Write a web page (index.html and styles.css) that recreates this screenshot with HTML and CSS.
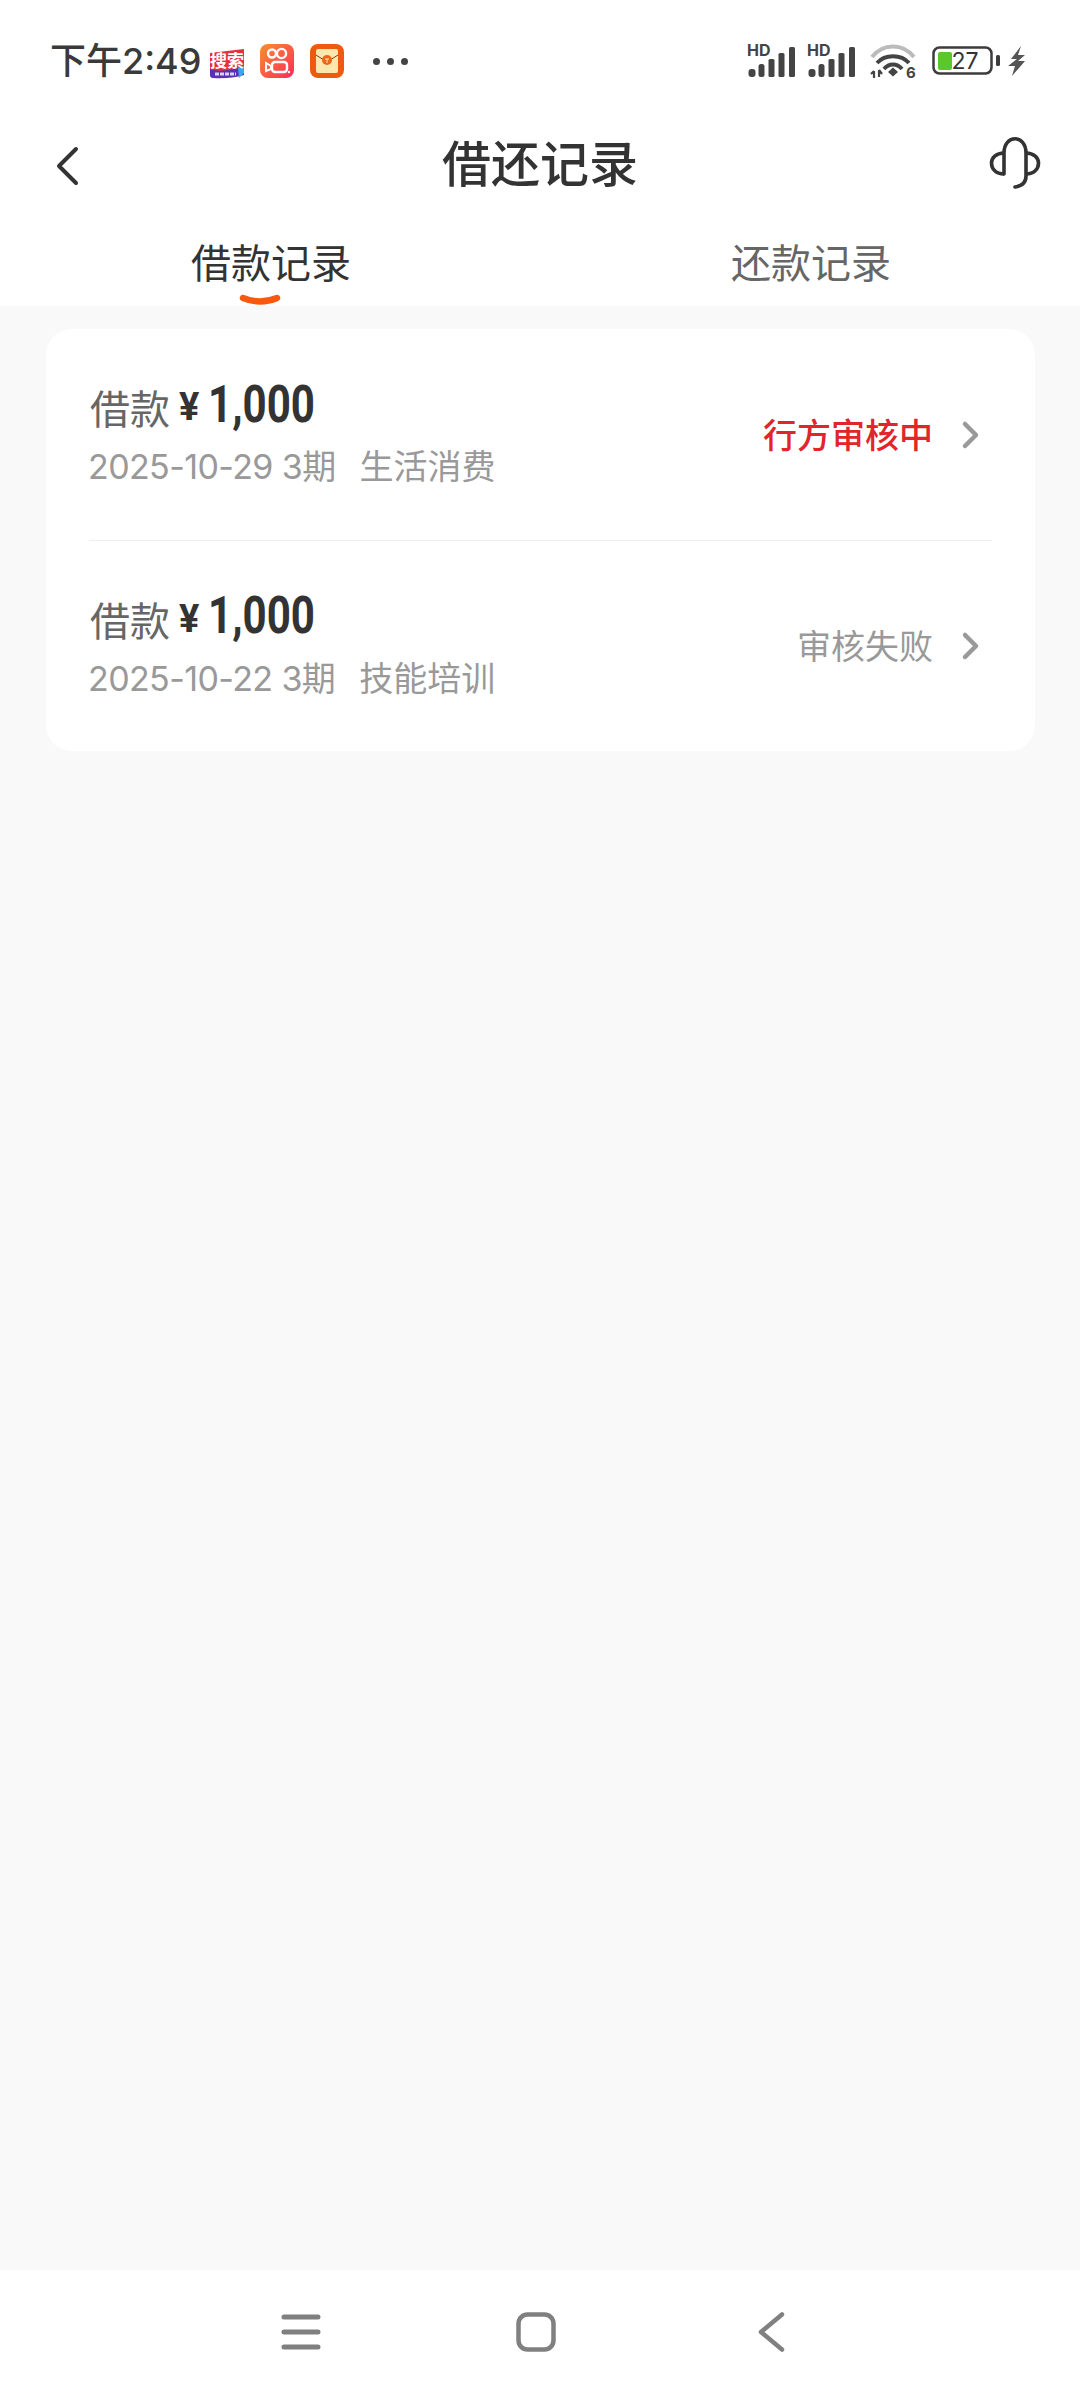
FILE: index.html
```html
<!DOCTYPE html>
<html lang="zh">
<head>
<meta charset="utf-8">
<title>借还记录</title>
<link rel="stylesheet" href="styles.css">
</head>
<body>
<div class="page">
  <div class="status">
    <div class="status-left">
      <span class="time">下午2:49</span>
      <svg class="app app-search" viewBox="0 0 34 30">
        <path d="M0 4 L34 0 V22 L0 22Z" fill="#e4303c"/>
        <path d="M0 20 C10 24 24 20 34 18 V26 Q20 30 3 29 Q0 29 0 26Z" fill="#5a2fb0"/>
        <path d="M28 19 L34 17 V24 L29 29 Z" fill="#38a9e6"/>
        <path d="M5 25 H26" stroke="#d8d0f0" stroke-width="3" stroke-dasharray="4 1"/>
        <text x="17" y="17.500" class="app-search-text">搜索</text>
      </svg>
      <svg class="app" viewBox="0 0 34 34">
        <defs><linearGradient id="ks" x1="0" y1="0" x2="1" y2="1"><stop offset="0" stop-color="#fb8f2c"/><stop offset="1" stop-color="#fb2b5c"/></linearGradient></defs>
        <rect width="34" height="34" rx="8" fill="url(#ks)"/>
        <circle cx="12" cy="9.500" r="4" fill="none" stroke="#fff" stroke-width="2.400"/>
        <circle cx="21.500" cy="9.500" r="4.600" fill="none" stroke="#fff" stroke-width="2.400"/>
        <rect x="12" y="18" width="15" height="10" rx="3" fill="none" stroke="#fff" stroke-width="2.400"/>
        <path d="M11 22 L6 19 V27 L11 25Z" fill="none" stroke="#fff" stroke-width="2"/>
        <circle cx="29" cy="28" r="1.200" fill="#fff"/>
      </svg>
      <svg class="app" viewBox="0 0 34 34">
        <rect width="34" height="34" rx="8" fill="#ee5a10"/>
        <rect x="6" y="5" width="22" height="24" rx="2" fill="#fde7ac"/>
        <path d="M6 11 L17 18 L28 11" fill="none" stroke="#8a3a10" stroke-width="1"/>
        <circle cx="17" cy="16" r="5" fill="#f0641a"/>
        <path d="M15 15 H19 M17 15 V19" stroke="#fde7ac" stroke-width="1"/>
      </svg>
      <span class="dots"><i></i><i></i><i></i></span>
    </div>
    <div class="status-right">
      <svg class="sig" viewBox="0 0 50 34">
        <text x="0" y="12" class="hd">HD</text>
        <g fill="#444">
          <rect x="1.500" y="25" width="7" height="8" rx="3"/>
          <rect x="11.500" y="20" width="6" height="13" rx="2.500"/>
          <rect x="21.500" y="15" width="6" height="18" rx="1.500"/>
          <rect x="31.500" y="9" width="6" height="24" rx="1.500"/>
          <rect x="42" y="3" width="6" height="30" rx="1.500"/>
        </g>
      </svg>
      <svg class="sig sig2" viewBox="0 0 50 34">
        <text x="0" y="12" class="hd">HD</text>
        <g fill="#444">
          <rect x="1.500" y="25" width="7" height="8" rx="3"/>
          <rect x="11.500" y="20" width="6" height="13" rx="2.500"/>
          <rect x="21.500" y="15" width="6" height="18" rx="1.500"/>
          <rect x="31.500" y="9" width="6" height="24" rx="1.500"/>
          <rect x="42" y="3" width="6" height="30" rx="1.500"/>
        </g>
      </svg>
      <svg class="wifi" viewBox="0 0 46 36">
        <path d="M2 14 C13 0 33 0 44 14" fill="none" stroke="#bbb" stroke-width="4"/>
        <path d="M7 20 C15 11 31 11 39 20" fill="none" stroke="#444" stroke-width="4"/>
        <path d="M14 26 C19 20 27 20 32 26" fill="none" stroke="#444" stroke-width="4"/>
        <path d="M18 29 L23 24.500 L28 29 L23 33.500Z" fill="#444"/>
        <path d="M4 28 V35 M1 31 L4 28 M9 27 V34 M9 27 L12 31" fill="none" stroke="#444" stroke-width="2.200"/>
        <text x="36" y="35" class="six">6</text>
      </svg>
      <svg class="batt" viewBox="0 0 68 30">
        <rect x="1.500" y="1.500" width="58" height="26" rx="6" fill="none" stroke="#3c3c3c" stroke-width="2.500"/>
        <rect x="6" y="6" width="14" height="18" rx="2" fill="#5cc72a"/>
        <rect x="64" y="9" width="4" height="11" rx="1.500" fill="#3c3c3c"/>
        <text x="19.500" y="23" class="batt-n">27</text>
      </svg>
      <svg class="bolt" viewBox="0 0 18 30">
        <path d="M13 0 L3 13 L9 13 L0 20 L7 20 L4 30 L17 15 L10 15 L17 9 L10 9Z" fill="#555"/>
      </svg>
    </div>
  </div>

  <header class="bar">
    <svg class="bar-back" viewBox="0 0 24 40"><path d="M21 3 L4 20 L21 37" fill="none" stroke="#333" stroke-width="4" stroke-linecap="round" stroke-linejoin="round"/></svg>
    <h1 class="title">借还记录</h1>
    <svg class="bar-help" viewBox="0 0 50 52">
      <path d="M14 36 V15 C14 -4 36 -4 36 15 V38 C36 45 32 48 25 49" fill="none" stroke="#333" stroke-width="3.600" stroke-linecap="round"/>
      <path d="M14 15 C6 15 1.500 20 1.500 25 C1.500 31 6 36 14 36" fill="none" stroke="#333" stroke-width="3.600"/>
      <path d="M36 15 C44 15 48.500 20 48.500 25 C48.500 31 44 36 36 36" fill="none" stroke="#333" stroke-width="3.600"/>
    </svg>
  </header>

  <nav class="tabs">
    <div class="tab tab-on">借款记录<svg class="smile" viewBox="0 0 42 12"><path d="M4 3 Q21 10 38 3" fill="none" stroke="#f9590f" stroke-width="6.500" stroke-linecap="round"/></svg></div>
    <div class="tab">还款记录</div>
  </nav>

  <main class="content">
    <section class="card">
      <div class="row">
        <div class="info">
          <div class="line1"><span class="lab">借款</span><span class="cur">¥</span><span class="amt">1,000</span></div>
          <div class="line2"><span>2025-10-29 3期</span><span class="use">生活消费</span></div>
        </div>
        <span class="state state-red">行方审核中</span>
        <svg class="chev" viewBox="0 0 18 28"><path d="M3 3 L14 14 L3 25" fill="none" stroke="#999" stroke-width="4.500" stroke-linecap="round" stroke-linejoin="round"/></svg>
      </div>
      <div class="row">
        <div class="info">
          <div class="line1"><span class="lab">借款</span><span class="cur">¥</span><span class="amt">1,000</span></div>
          <div class="line2"><span>2025-10-22 3期</span><span class="use">技能培训</span></div>
        </div>
        <span class="state">审核失败</span>
        <svg class="chev" viewBox="0 0 18 28"><path d="M3 3 L14 14 L3 25" fill="none" stroke="#999" stroke-width="4.500" stroke-linecap="round" stroke-linejoin="round"/></svg>
      </div>
    </section>
  </main>

  <footer class="nav">
    <svg class="nav-menu" viewBox="0 0 40 36"><path d="M3 3 H37 M3 18 H37 M3 33 H37" stroke="#808080" stroke-width="5" stroke-linecap="round"/></svg>
    <svg class="nav-home" viewBox="0 0 40 40"><rect x="2.500" y="2.500" width="35" height="35" rx="9" fill="none" stroke="#808080" stroke-width="4.500"/></svg>
    <svg class="nav-back" viewBox="0 0 28 40"><path d="M25 2.500 L4 20 L25 37.500" fill="none" stroke="#808080" stroke-width="4.500" stroke-linecap="round" stroke-linejoin="round"/></svg>
  </footer>
</div>
</body>
</html>
```

FILE: styles.css
```css
* { box-sizing: border-box; margin: 0; padding: 0; }
html, body { width: 1080px; height: 2400px; }
body {
  margin: 0;
  background: #f9f9f9;
  font-family: "Inter", "Noto Sans CJK SC", sans-serif;
  color: #333;
}
.page { width: 1080px; height: 2400px; display: flex; flex-direction: column; }
svg { overflow: visible; }

.status {
  height: 120px;
  flex: none;
  background: #fff;
  display: flex;
  justify-content: space-between;
  align-items: center;
  padding: 2px 54px 0 50px;
}
.status-left { display: flex; align-items: center; }
.time { font-size: 36px; font-weight: 500; color: #3a3a3a; line-height: 44px; width: 160px; white-space: nowrap; }
.app { width: 34px; height: 34px; margin-right: 16px; display: block; }
.app-search { height: 30px; margin-top: 6px; }
.app-search-text { font-family: "Noto Sans CJK SC", sans-serif; font-size: 17px; font-weight: 700; fill: #fff; text-anchor: middle; }
.dots { display: flex; gap: 7px; margin-left: 13px; }
.dots i { width: 7px; height: 7px; border-radius: 50%; background: #444; display: block; }

.status-right { display: flex; align-items: center; }
.sig { width: 50px; height: 34px; display: block; }
.sig2 { margin-left: 10px; }
.wifi { width: 46px; height: 36px; margin-left: 13px; display: block; }
.batt { width: 68px; height: 30px; margin-left: 16px; display: block; }
.bolt { width: 18px; height: 30px; margin-left: 8px; display: block; }
.hd { font-family: "Inter", sans-serif; font-size: 16px; font-weight: 700; fill: #444; }
.six { font-family: "Inter", sans-serif; font-size: 15px; font-weight: 700; fill: #444; }
.batt-n { font-family: "Inter", sans-serif; font-size: 23px; fill: #333; }

.bar {
  height: 112px;
  flex: none;
  background: #fff;
  display: grid;
  grid-template-columns: 1fr auto 1fr;
  align-items: center;
  padding: 0 40px 24px 55px;
}
.bar-back { width: 24px; height: 40px; display: block; margin-top: 4px; }
.bar-help { width: 50px; height: 52px; display: block; justify-self: end; }
.title { font-size: 49px; font-weight: 500; color: #333; line-height: 64px; font-family: "Noto Sans CJK SC", sans-serif; margin: -6px 15px 0 0; }

.tabs {
  height: 74px;
  flex: none;
  background: #fff;
  display: grid;
  grid-template-columns: 1fr 1fr;
}
.tab {
  position: relative;
  text-align: center;
  font-size: 40px;
  line-height: 56px;
  color: #666;
  font-family: "Noto Sans CJK SC", sans-serif;
  padding: 1px 0 0 2px;
}
.tab-on { color: #333; }
.smile { position: absolute; left: 239px; top: 63px; width: 42px; height: 12px; }

.content { flex: 1; padding: 23px 45px 0 46px; }
.card { background: #fff; border-radius: 26px; padding: 0 43px; }
.row {
  height: 211px;
  display: flex;
  align-items: center;
}
.row + .row { border-top: 1px solid #eee; }
.info { flex: 1; padding-bottom: 4px; }
.line1 { display: flex; align-items: center; height: 62px; }
.lab { font-size: 40px; color: #666; font-family: "Noto Sans CJK SC", sans-serif; margin-left: 1px; }
.cur { font-size: 38px; font-weight: 700; color: #333; margin-left: 9px; width: 29px; font-family: "Roboto", sans-serif; }
.amt { font-size: 52px; font-weight: 700; color: #333; font-family: "Roboto", sans-serif; transform: scaleX(0.81); transform-origin: left center; margin-top: -6px; }
.line2 { font-size: 34px; color: #999; line-height: 44px; margin: 7px 0 0 -1px; display: flex; gap: 24px; letter-spacing: -0.6px; }
.use { letter-spacing: 0; }
.state { font-size: 34px; color: #999; font-family: "Noto Sans CJK SC", sans-serif; margin-bottom: 3px; }
.state-red { color: #e0262b; font-weight: 500; }
.chev { width: 18px; height: 28px; margin-left: 29px; margin-right: 12px; display: block; }

.nav {
  height: 130px;
  flex: none;
  background: #fff;
  display: grid;
  grid-template-columns: repeat(3, 235px);
  justify-content: center;
  justify-items: center;
  align-items: center;
  padding: 0 8px 6px 0;
}
.nav-menu { width: 40px; height: 36px; display: block; }
.nav-home { width: 40px; height: 40px; display: block; }
.nav-back { width: 28px; height: 40px; display: block; }
```
